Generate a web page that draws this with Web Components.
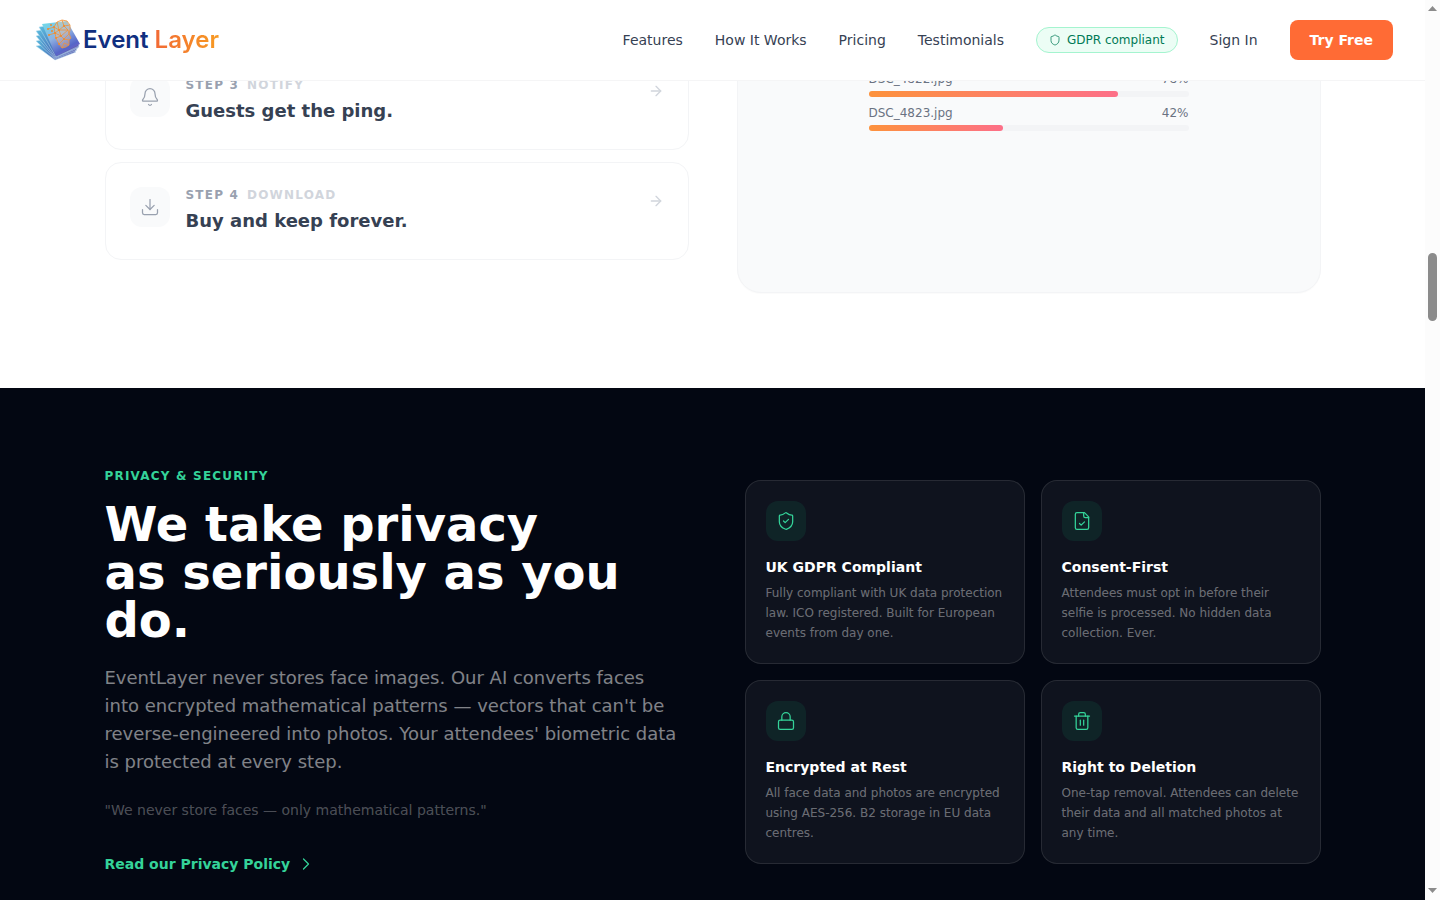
<!DOCTYPE html>
<html lang="en">
<head>
<meta charset="utf-8">
<meta name="viewport" content="width=device-width, initial-scale=1">
<title>Event Layer</title>
<style>
    body {
        margin: 0;
        background: #fff;
        color: #364153;
        font-family: "DejaVu Sans", sans-serif;
        font-size: 14px;
        line-height: 20px;
    }
</style>
</head>
<body>
<page-frame>
    <site-header slot="header"></site-header>
    <steps-section>
        <step-card slot="steps" icon="bell" step="Step 3" label="Notify">Guests get the ping.</step-card>
        <step-card slot="steps" icon="download" step="Step 4" label="Download">Buy and keep forever.</step-card>
        <upload-row slot="uploads" file="DSC_4822.jpg" percent="78"></upload-row>
        <upload-row slot="uploads" file="DSC_4823.jpg" percent="42"></upload-row>
    </steps-section>
    <privacy-section>
        <privacy-card icon="shieldCheck" title="UK GDPR Compliant">Fully compliant with UK data protection law. ICO registered. Built for European events from day one.</privacy-card>
        <privacy-card icon="fileCheck" title="Consent-First">Attendees must opt in before their selfie is processed. No hidden data collection. Ever.</privacy-card>
        <privacy-card icon="lock" title="Encrypted at Rest">All face data and photos are encrypted using AES-256. B2 storage in EU data centres.</privacy-card>
        <privacy-card icon="trash" title="Right to Deletion">One-tap removal. Attendees can delete their data and all matched photos at any time.</privacy-card>
    </privacy-section>
</page-frame>

<script>
const icons = {
    bell: `<path d="M10.268 21a2 2 0 0 0 3.464 0"/><path d="M3.262 15.326A1 1 0 0 0 4 17h16a1 1 0 0 0 .74-1.673C19.41 13.956 18 12.499 18 8A6 6 0 0 0 6 8c0 4.499-1.411 5.956-2.738 7.326"/>`,
    download: `<path d="M12 15V3"/><path d="M21 15v4a2 2 0 0 1-2 2H5a2 2 0 0 1-2-2v-4"/><path d="m7 10 5 5 5-5"/>`,
    arrow: `<path d="M5 12h14"/><path d="m12 5 7 7-7 7"/>`,
    chevron: `<path d="m9 18 6-6-6-6"/>`,
    shield: `<path d="M20 13c0 5-3.5 7.5-7.66 8.95a1 1 0 0 1-.67-.01C7.5 20.5 4 18 4 13V6a1 1 0 0 1 1-1c2 0 4.5-1.2 6.24-2.72a1.17 1.17 0 0 1 1.52 0C14.51 3.81 17 5 19 5a1 1 0 0 1 1 1z"/>`,
    fileCheck: `<path d="M15 2H6a2 2 0 0 0-2 2v16a2 2 0 0 0 2 2h12a2 2 0 0 0 2-2V7z"/><path d="M14 2v4a2 2 0 0 0 2 2h4"/><path d="m9 15 2 2 4-4"/>`,
    lock: `<rect width="18" height="11" x="3" y="11" rx="2"/><path d="M7 11V7a5 5 0 0 1 10 0v4"/>`,
    trash: `<path d="M10 11v6"/><path d="M14 11v6"/><path d="M19 6v14a2 2 0 0 1-2 2H7a2 2 0 0 1-2-2V6"/><path d="M3 6h18"/><path d="M8 6V4a2 2 0 0 1 2-2h4a2 2 0 0 1 2 2v2"/>`,
};
icons.shieldCheck = icons.shield + `<path d="m9 12 2 2 4-4"/>`;

function icon(name, size, stroke = 1.5) {
    return `<svg width="${size}" height="${size}" viewBox="0 0 24 24" fill="none" stroke="currentColor" stroke-width="${stroke}" stroke-linecap="round" stroke-linejoin="round" aria-hidden="true">${icons[name]}</svg>`;
}

class PageFrame extends HTMLElement {
    connectedCallback() {
        this.attachShadow({ mode: "open" }).innerHTML = `
            <style>
                :host {
                    display: grid;
                    grid-template-columns: minmax(0, 1fr) 15px;
                    height: 100vh;
                    overflow: hidden;
                }

                .view {
                    height: 100vh;
                    overflow: hidden;
                }

                /* the page runs on beneath the header */
                main {
                    margin-top: -81px;
                }
            </style>

            <div class="view">
                <slot name="header"></slot>
                <main><slot></slot></main>
            </div>
            <scroll-rail></scroll-rail>
        `;
    }
}

class ScrollRail extends HTMLElement {
    connectedCallback() {
        this.attachShadow({ mode: "open" }).innerHTML = `
            <style>
                :host {
                    display: flex;
                    flex-direction: column;
                    align-items: center;
                    background: #fcfcfc;
                }

                svg {
                    display: block;
                    flex: none;
                    fill: #8b8b8b;
                }

                .before { flex: 238; }
                .after { flex: 564; }

                .thumb {
                    flex: 68;
                    width: 9px;
                    border-radius: 5px;
                    background: #8b8b8b;
                }
            </style>

            <svg width="15" height="15"><path d="M3 11 7.5 6 12 11z"/></svg>
            <div class="before"></div>
            <div class="thumb"></div>
            <div class="after"></div>
            <svg width="15" height="15"><path d="M3 3 7.5 8 12 3z"/></svg>
        `;
    }
}

class SiteLogo extends HTMLElement {
    connectedCallback() {
        this.attachShadow({ mode: "open" }).innerHTML = `
            <style>
                :host { display: block; }

                a {
                    display: flex;
                    align-items: center;
                    gap: 3px;
                    color: #102f80;
                    font: 600 24px/32px Inter, sans-serif;
                    text-decoration: none;
                }

                .layer {
                    color: transparent;
                    background: linear-gradient(90deg, #f26a35, #f79a22);
                    background-clip: text;
                    -webkit-background-clip: text;
                }
            </style>

            <a href="#">
                <svg width="48" height="44" viewBox="0 0 48 44" aria-hidden="true">
                    <defs>
                        <linearGradient id="sheet" x1="0" y1="0" x2="1" y2="1">
                            <stop offset="0" stop-color="#5cc4e2"/>
                            <stop offset=".5" stop-color="#4d7fc0"/>
                            <stop offset="1" stop-color="#6d4aa8"/>
                        </linearGradient>
                        <linearGradient id="front" x1=".1" y1="0" x2=".7" y2="1">
                            <stop offset="0" stop-color="#6fdbe8"/>
                            <stop offset=".45" stop-color="#8fb2e2"/>
                            <stop offset=".8" stop-color="#5566c8"/>
                            <stop offset="1" stop-color="#7a5cc4"/>
                        </linearGradient>
                    </defs>
                    <g fill="url(#sheet)" stroke="#b9dff0" stroke-width=".5">
                        <path d="M4 28 30 24 44 34 23 42z"/>
                        <path d="M4 23 32 18 45 32 23 41z"/>
                        <path d="M4 18 33 12 46 30 23 40z"/>
                        <path d="M4 13 34 8 47 29 23 39z"/>
                        <path d="M7 9 35 5 47 28 24 39z"/>
                    </g>
                    <path d="M10 6 35 3 48 26 24 38z" fill="url(#front)"/>
                    <path d="M22 9 25 4 30 2 35 3 38 7 38 12 37 16 39 20 37 22 37 27 34 29 30 30 27 26 23 20z" fill="#f6c898" fill-opacity=".35"/>
                    <g fill="none" stroke="#f0923a" stroke-width=".8">
                        <path d="M22 9 25 4 30 2 35 3 38 7 38 12 37 16 39 20 37 22 37 27 34 29 30 30"/>
                        <path d="M16 11 22 9 27 12 32 8 38 7M25 4 27 12 23 15 17 17M30 2 32 8 36 12 27 12 29 18 23 15 22 9M29 18 36 12 37 16 32 21 29 18 24 20 27 26 32 21 37 22M23 15 24 20M27 26 30 30 32 25 37 27"/>
                    </g>
                    <g fill="#ef8a2e">
                        <circle cx="16" cy="11" r="1"/><circle cx="19" cy="7" r="1"/>
                        <circle cx="17" cy="17" r="1"/><circle cx="20" cy="13" r="1"/>
                        <circle cx="22" cy="9" r="1"/><circle cx="27" cy="12" r="1"/>
                        <circle cx="32" cy="8" r="1"/><circle cx="23" cy="15" r="1"/>
                        <circle cx="29" cy="18" r="1"/><circle cx="24" cy="20" r="1"/>
                        <circle cx="32" cy="21" r="1"/><circle cx="27" cy="26" r="1"/>
                    </g>
                </svg>
                <span>Event <span class="layer">Layer</span></span>
            </a>
        `;
    }
}

class SiteHeader extends HTMLElement {
    connectedCallback() {
        this.attachShadow({ mode: "open" }).innerHTML = `
            <style>
                :host {
                    display: block;
                    position: relative;
                    z-index: 1;
                }

                header {
                    display: flex;
                    align-items: center;
                    justify-content: space-between;
                    height: 80px;
                    padding: 0 32px;
                    background: #fff;
                    border-bottom: 1px solid #f5f5f6;
                }

                nav {
                    display: flex;
                    align-items: center;
                    gap: 32px;
                }

                a {
                    color: #364153;
                    text-decoration: none;
                }

                .badge {
                    display: flex;
                    align-items: center;
                    gap: 6px;
                    padding: 4px 12px;
                    border: 1px solid #a4f4cf;
                    border-radius: 13px;
                    background: #ecfdf5;
                    color: #007a55;
                    font-size: 12px;
                    line-height: 16px;
                }

                button {
                    padding: 10px 20px;
                    border: 0;
                    border-radius: 8px;
                    background: #ff6b35;
                    color: #fff;
                    font: bold 14px/20px "DejaVu Sans", sans-serif;
                }
            </style>

            <header>
                <site-logo></site-logo>
                <nav>
                    <a href="#">Features</a>
                    <a href="#">How It Works</a>
                    <a href="#">Pricing</a>
                    <a href="#">Testimonials</a>
                    <span class="badge">${icon("shield", 12)}GDPR compliant</span>
                    <a href="#">Sign In</a>
                    <button type="button">Try Free</button>
                </nav>
            </header>
        `;
    }
}

class StepsSection extends HTMLElement {
    connectedCallback() {
        this.attachShadow({ mode: "open" }).innerHTML = `
            <style>
                :host { display: block; }

                .grid {
                    display: grid;
                    grid-template-columns: 1fr 1fr;
                    align-items: start;
                    gap: 48px;
                    max-width: 1216px;
                    margin: 0 auto;
                    padding: 52px 32px 95px;
                }

                .steps {
                    display: grid;
                    gap: 12px;
                }

                .panel {
                    display: flex;
                    justify-content: center;
                    box-sizing: border-box;
                    min-height: 241px;
                    padding: 18px 32px;
                    border: 1px solid #f3f4f6;
                    border-radius: 24px;
                    background: #f9fafb;
                    box-shadow: 0 1px 1px rgba(0, 0, 0, 0.02);
                }

                .uploads {
                    display: flex;
                    flex-direction: column;
                    gap: 8px;
                    width: 100%;
                    max-width: 320px;
                }
            </style>

            <section class="grid">
                <div class="steps"><slot name="steps"></slot></div>
                <div class="panel">
                    <div class="uploads"><slot name="uploads"></slot></div>
                </div>
            </section>
        `;
    }
}

class StepCard extends HTMLElement {
    connectedCallback() {
        this.attachShadow({ mode: "open" }).innerHTML = `
            <style>
                :host { display: block; }

                button {
                    display: flex;
                    align-items: flex-start;
                    gap: 16px;
                    width: 100%;
                    padding: 24px;
                    border: 1px solid #f3f4f6;
                    border-radius: 16px;
                    background: #fff;
                    font: inherit;
                    text-align: left;
                }

                .icon {
                    display: grid;
                    place-items: center;
                    width: 40px;
                    height: 40px;
                    border-radius: 12px;
                    background: #f9fafb;
                    color: #99a1af;
                }

                .text {
                    display: grid;
                    flex: 1;
                    gap: 4px;
                }

                .meta {
                    display: flex;
                    gap: 8px;
                    color: #99a1af;
                    font-size: 12px;
                    font-weight: bold;
                    line-height: 16px;
                    letter-spacing: 0.1em;
                    text-transform: uppercase;
                }

                .label { color: #d1d5dc; }

                .title {
                    color: #364153;
                    font-size: 18px;
                    font-weight: bold;
                    line-height: 28px;
                }

                .arrow {
                    display: flex;
                    padding-top: 6px;
                    color: #d1d5dc;
                }
            </style>

            <button type="button">
                <span class="icon">${icon(this.getAttribute("icon"), 20)}</span>
                <span class="text">
                    <span class="meta">
                        <span>${this.getAttribute("step")}</span>
                        <span class="label">${this.getAttribute("label")}</span>
                    </span>
                    <span class="title"><slot></slot></span>
                </span>
                <span class="arrow">${icon("arrow", 16, 2)}</span>
            </button>
        `;
    }
}

class UploadRow extends HTMLElement {
    connectedCallback() {
        const percent = this.getAttribute("percent");
        this.attachShadow({ mode: "open" }).innerHTML = `
            <style>
                :host {
                    display: grid;
                    gap: 4px;
                    color: #6a7282;
                    font-size: 12px;
                    line-height: 16px;
                }

                .names {
                    display: flex;
                    justify-content: space-between;
                }

                .track {
                    height: 6px;
                    border-radius: 3px;
                    background: #f3f4f6;
                }

                .bar {
                    width: ${percent}%;
                    height: 100%;
                    border-radius: 3px;
                    background: linear-gradient(90deg, #fd923c, #fd6f88);
                }
            </style>

            <div class="names"><span>${this.getAttribute("file")}</span><span>${percent}%</span></div>
            <div class="track" role="progressbar" aria-valuenow="${percent}"><div class="bar"></div></div>
        `;
    }
}

class PrivacySection extends HTMLElement {
    connectedCallback() {
        this.attachShadow({ mode: "open" }).innerHTML = `
            <style>
                :host {
                    display: block;
                    background: #030712;
                }

                .grid {
                    display: grid;
                    grid-template-columns: 1fr 1fr;
                    align-items: center;
                    gap: 64px;
                    max-width: 1216px;
                    margin: 0 auto;
                    padding: 80px 32px;
                }

                .eyebrow {
                    margin: 0 0 16px;
                    color: #34d399;
                    font-size: 12px;
                    font-weight: bold;
                    line-height: 16px;
                    letter-spacing: 0.1em;
                    text-transform: uppercase;
                }

                h2 {
                    margin: 0 0 20px;
                    color: #fff;
                    font-size: 48px;
                    line-height: 48px;
                }

                .lead {
                    margin: 0 0 24px;
                    color: rgba(255, 255, 255, 0.5);
                    font-size: 18px;
                    line-height: 28px;
                }

                .quote {
                    margin: 0 0 32px;
                    color: rgba(255, 255, 255, 0.3);
                }

                a {
                    display: flex;
                    align-items: center;
                    gap: 6px;
                    color: #34d399;
                    font-weight: bold;
                    line-height: 24px;
                    text-decoration: none;
                }

                .cards {
                    display: grid;
                    grid-template-columns: 1fr 1fr;
                    gap: 16px;
                }
            </style>

            <section class="grid">
                <div>
                    <p class="eyebrow">Privacy &amp; Security</p>
                    <h2>We take privacy<br>as seriously as you do.</h2>
                    <p class="lead">EventLayer never stores face images. Our AI converts faces into encrypted mathematical patterns — vectors that can't be reverse-engineered into photos. Your attendees' biometric data is protected at every step.</p>
                    <p class="quote">"We never store faces — only mathematical patterns."</p>
                    <a href="#">Read our Privacy Policy ${icon("chevron", 20)}</a>
                </div>
                <div class="cards"><slot></slot></div>
            </section>
        `;
    }
}

class PrivacyCard extends HTMLElement {
    connectedCallback() {
        this.attachShadow({ mode: "open" }).innerHTML = `
            <style>
                :host {
                    display: block;
                    padding: 20px;
                    border: 1px solid rgba(255, 255, 255, 0.1);
                    border-radius: 16px;
                    background: rgba(255, 255, 255, 0.05);
                }

                .icon {
                    display: grid;
                    place-items: center;
                    width: 40px;
                    height: 40px;
                    margin-bottom: 16px;
                    border-radius: 12px;
                    background: rgba(16, 185, 129, 0.1);
                    color: #34d399;
                }

                h3 {
                    margin: 0 0 6px;
                    color: #fff;
                    font-size: 14px;
                    line-height: 20px;
                }

                p {
                    margin: 0;
                    color: rgba(255, 255, 255, 0.4);
                    font-size: 12px;
                    line-height: 20px;
                }
            </style>

            <div class="icon">${icon(this.getAttribute("icon"), 20)}</div>
            <h3>${this.getAttribute("title")}</h3>
            <p><slot></slot></p>
        `;
    }
}

customElements.define("page-frame", PageFrame);
customElements.define("scroll-rail", ScrollRail);
customElements.define("site-logo", SiteLogo);
customElements.define("site-header", SiteHeader);
customElements.define("steps-section", StepsSection);
customElements.define("step-card", StepCard);
customElements.define("upload-row", UploadRow);
customElements.define("privacy-section", PrivacySection);
customElements.define("privacy-card", PrivacyCard);
</script>
</body>
</html>
